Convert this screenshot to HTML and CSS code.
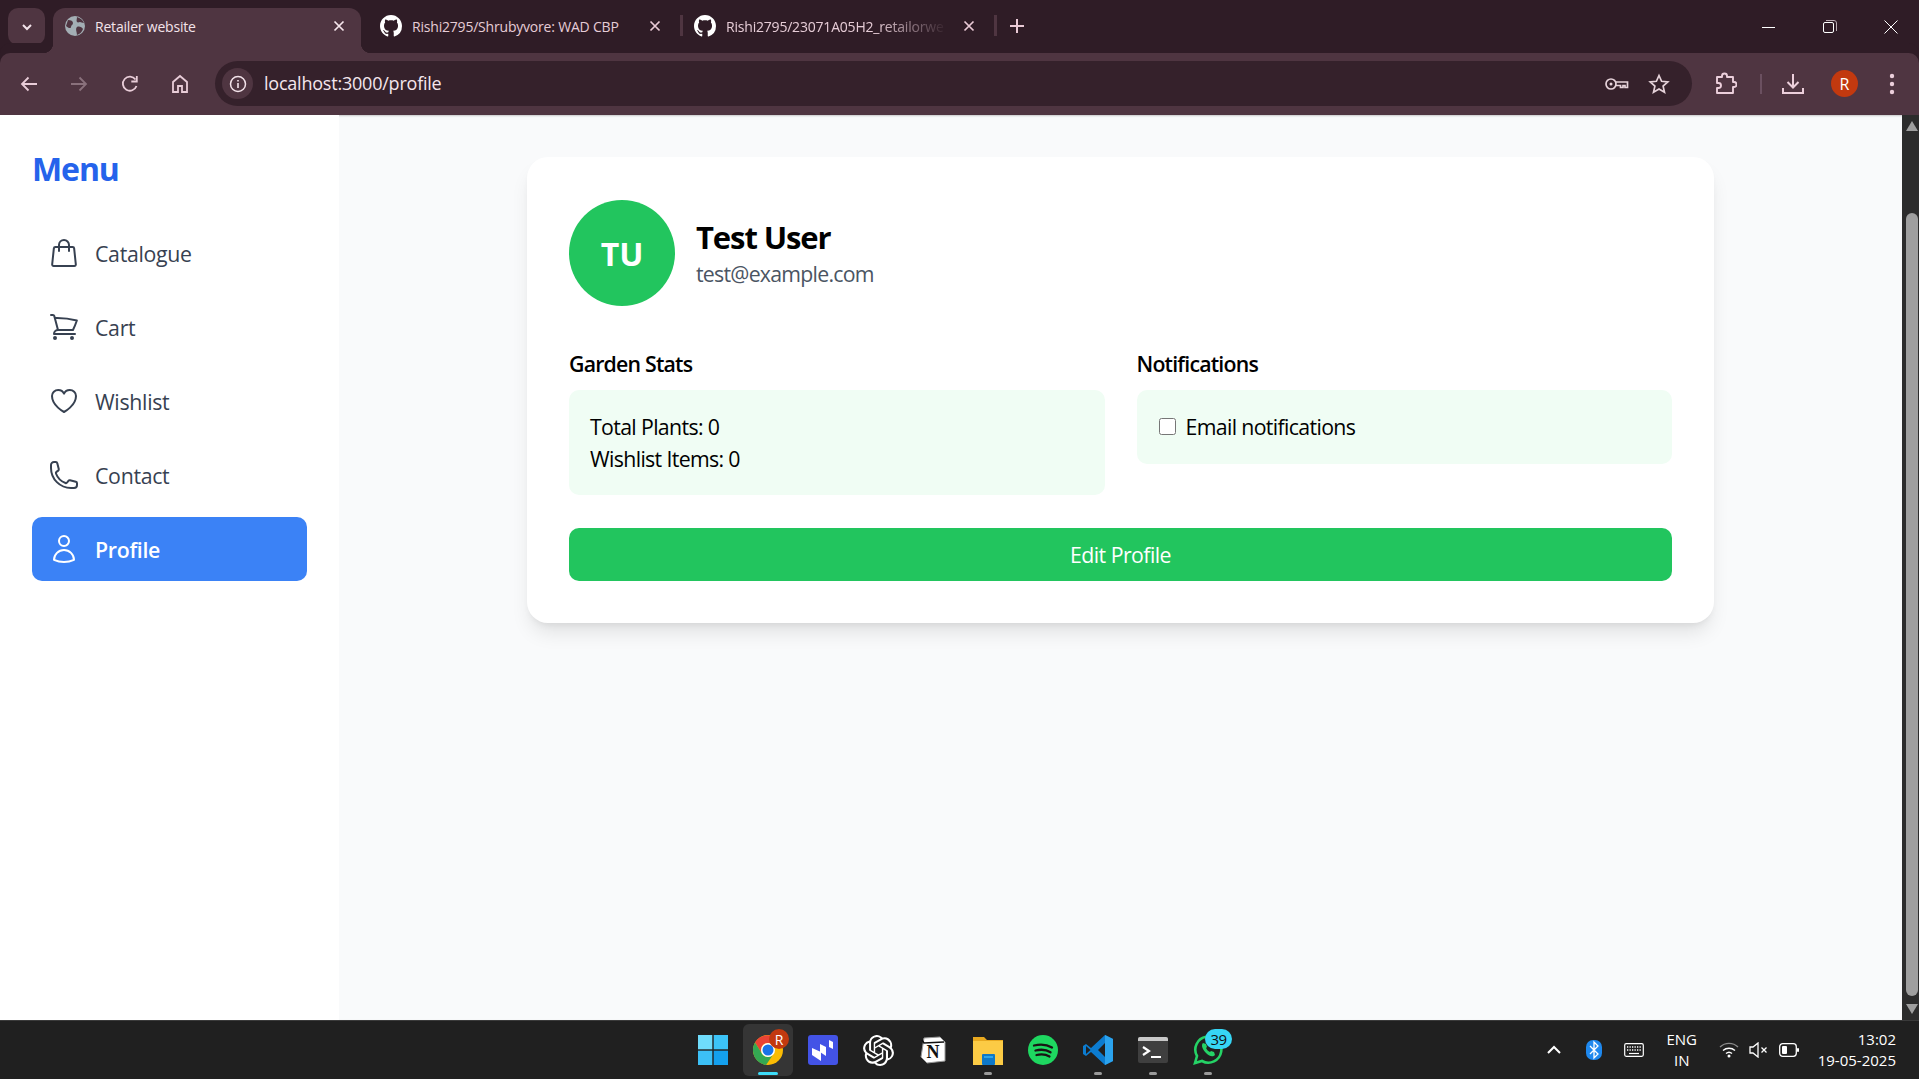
FILE: index.html

```html
<!DOCTYPE html>
<html lang="en">
<head>
  <meta charset="UTF-8" />
  <title>Retailer website</title>
  <link rel="stylesheet" href="styles.css">
</head>
<body>
  <div class="tabstrip">
    <div class="tab-search">
      <svg width="14" height="14" viewBox="0 0 14 14"><path d="M3 5l4 4 4-4" fill="none" stroke="#f3e3ea" stroke-width="2"/></svg>
    </div>
    <div class="tab active">
      <svg class="favicon" width="20" height="20" viewBox="0 0 20 20"><circle cx="10" cy="10" r="10" fill="#a3aeb4"/><path d="M3 4c3 0 5 1 5 3s-2 2-2 4-3 1-5-1zM12 1c3 1 6 3 7 6-2 0-3-1-4-1s-2 1-3 0 0-3 0-5zM12 11c2-1 5 0 6 2-1 3-3 5-6 6 0-3-2-6 0-8z" fill="#4f3541"/></svg>
      <span class="tab-title">Retailer website</span>
      <svg class="tab-x" width="12" height="12" viewBox="0 0 12 12"><path d="M1.5 1.5l9 9M10.5 1.5l-9 9" stroke="#f6e6ec" stroke-width="1.7"/></svg>
    </div>
    <div class="tab">
      <svg class="favicon" width="22" height="22" viewBox="0 0 16 16"><path fill="#fff" d="M8 0C3.58 0 0 3.58 0 8c0 3.54 2.29 6.53 5.47 7.59.4.07.55-.17.55-.38 0-.19-.01-.82-.01-1.49-2.01.37-2.53-.49-2.69-.94-.09-.23-.48-.94-.82-1.13-.28-.15-.68-.52-.01-.53.63-.01 1.08.58 1.23.82.72 1.21 1.87.87 2.33.66.07-.52.28-.87.51-1.07-1.78-.2-3.64-.89-3.64-3.95 0-.87.31-1.59.82-2.15-.08-.2-.36-1.02.08-2.12 0 0 .67-.21 2.2.82.64-.18 1.32-.27 2-.27s1.36.09 2 .27c1.53-1.04 2.2-.82 2.2-.82.44 1.1.16 1.92.08 2.12.51.56.82 1.27.82 2.15 0 3.07-1.87 3.75-3.65 3.95.29.25.54.73.54 1.48 0 1.07-.01 1.93-.01 2.2 0 .21.15.46.55.38A8.01 8.01 0 0 0 16 8c0-4.42-3.58-8-8-8z"/></svg>
      <span class="tab-title">Rishi2795/Shrubyvore: WAD CBP</span>
      <svg class="tab-x" width="12" height="12" viewBox="0 0 12 12"><path d="M1.5 1.5l9 9M10.5 1.5l-9 9" stroke="#e9c9d5" stroke-width="1.7"/></svg>
    </div>
    <div class="tab-sep"></div>
    <div class="tab">
      <svg class="favicon" width="22" height="22" viewBox="0 0 16 16"><path fill="#fff" d="M8 0C3.58 0 0 3.58 0 8c0 3.54 2.29 6.53 5.47 7.59.4.07.55-.17.55-.38 0-.19-.01-.82-.01-1.49-2.01.37-2.53-.49-2.69-.94-.09-.23-.48-.94-.82-1.13-.28-.15-.68-.52-.01-.53.63-.01 1.08.58 1.23.82.72 1.21 1.87.87 2.33.66.07-.52.28-.87.51-1.07-1.78-.2-3.64-.89-3.64-3.95 0-.87.31-1.59.82-2.15-.08-.2-.36-1.02.08-2.12 0 0 .67-.21 2.2.82.64-.18 1.32-.27 2-.27s1.36.09 2 .27c1.53-1.04 2.2-.82 2.2-.82.44 1.1.16 1.92.08 2.12.51.56.82 1.27.82 2.15 0 3.07-1.87 3.75-3.65 3.95.29.25.54.73.54 1.48 0 1.07-.01 1.93-.01 2.2 0 .21.15.46.55.38A8.01 8.01 0 0 0 16 8c0-4.42-3.58-8-8-8z"/></svg>
      <span class="tab-title fade">Rishi2795/23071A05H2_retailorwe</span>
      <svg class="tab-x" width="12" height="12" viewBox="0 0 12 12"><path d="M1.5 1.5l9 9M10.5 1.5l-9 9" stroke="#e9c9d5" stroke-width="1.7"/></svg>
    </div>
    <div class="tab-sep"></div>
    <svg class="tab-new" width="16" height="16" viewBox="0 0 16 16"><path d="M8 1v14M1 8h14" stroke="#e9c9d5" stroke-width="2"/></svg>
    <div class="window-controls">
      <svg width="14" height="14" viewBox="0 0 14 14"><path d="M0 7.5h13" stroke="#fff" stroke-width="1"/></svg>
      <svg width="14" height="14" viewBox="0 0 14 14"><rect x=".5" y="2.5" width="10" height="10" rx="1.5" fill="none" stroke="#fff"/><path d="M3 .5h8a2.500 2.500 0 0 1 2.500 2.500v8" fill="none" stroke="#b9aab1"/></svg>
      <svg width="14" height="14" viewBox="0 0 14 14"><path d="M.5.5l13 13M13.500.5l-13 13" stroke="#fff" stroke-width="1"/></svg>
    </div>
  </div>

  <div class="toolbar">
    <svg class="tool first" width="20" height="20" viewBox="0 0 20 20"><path d="M18 10H3M9.500 3.500L3 10l6.500 6.500" fill="none" stroke="#e9cdd8" stroke-width="1.800"/></svg>
    <svg class="tool" width="20" height="20" viewBox="0 0 20 20"><path d="M2 10h15M10.500 3.500L17 10l-6.500 6.500" fill="none" stroke="#8a717c" stroke-width="1.800"/></svg>
    <svg class="tool reload" width="20" height="20" viewBox="0 0 20 20"><path d="M16.500 12a7 7 0 1 1-1-6.500" fill="none" stroke="#e9cdd8" stroke-width="1.800"/><path d="M16.800 2v5.500h-5.500" fill="none" stroke="#e9cdd8" stroke-width="1.800"/></svg>
    <svg class="tool" width="20" height="20" viewBox="0 0 20 20"><path d="M3 18V8l7-6 7 6v10h-5v-6H8v6z" fill="none" stroke="#e9cdd8" stroke-width="1.800"/></svg>
    <div class="omnibox">
      <div class="site-info">
        <svg width="18" height="18" viewBox="0 0 18 18"><circle cx="9" cy="9" r="7.500" fill="none" stroke="#f3e3ea" stroke-width="1.500"/><path d="M9 8v5M9 5v1.600" stroke="#f3e3ea" stroke-width="1.600"/></svg>
      </div>
      <span class="url">localhost:3000/profile</span>
      <svg class="omni-key" width="24" height="14" viewBox="0 0 24 14"><circle cx="6" cy="7" r="5" fill="none" stroke="#e6d3da" stroke-width="1.700"/><circle cx="6" cy="7" r="1.500" fill="#e6d3da"/><path d="M11 5h11.500v5.500h-2.500V8.500h-2V10.500h-2.500V8.500H11" fill="none" stroke="#e6d3da" stroke-width="1.700"/></svg>
      <svg class="omni-star" width="22" height="22" viewBox="0 0 22 22"><path d="M11 2.500l2.600 5.800 6.200.6-4.700 4.200 1.400 6.200L11 16.100l-5.500 3.200 1.400-6.200-4.700-4.200 6.200-.6z" fill="none" stroke="#e6d3da" stroke-width="1.700"/></svg>
    </div>
    <svg class="ext" width="24" height="24" viewBox="0 0 24 24"><path d="M4 5h5V4a2.500 2.500 0 0 1 5 0v1h6v5h1a2.500 2.500 0 0 1 0 5h-1v6H4v-5h1.500a2.500 2.500 0 0 0 0-5H4z" fill="none" stroke="#eccfdb" stroke-width="1.900" stroke-linejoin="round"/></svg>
    <div class="tool-sep"></div>
    <svg class="dl" width="24" height="24" viewBox="0 0 24 24"><path d="M12 2v13M6.500 10l5.500 5.500 5.500-5.500M2 16v5h20v-5" fill="none" stroke="#eccfdb" stroke-width="2"/></svg>
    <div class="avatar-small">R</div>
    <svg class="dots" width="6" height="22" viewBox="0 0 6 22"><circle cx="3" cy="3" r="2.200" fill="#eccfdb"/><circle cx="3" cy="11" r="2.200" fill="#eccfdb"/><circle cx="3" cy="19" r="2.200" fill="#eccfdb"/></svg>
  </div>

  <div class="page">
    <aside class="sidebar">
      <h2 class="menu-title">Menu</h2>
      <nav class="menu">
        <a class="menu-item">
          <svg width="32" height="32" viewBox="0 0 24 24" fill="none" stroke="currentColor" stroke-width="1.500" stroke-linecap="round" stroke-linejoin="round"><path d="M15.750 10.500V6a3.750 3.750 0 1 0-7.500 0v4.500m11.356-1.993l1.263 12c.07.665-.45 1.243-1.119 1.243H4.250a1.125 1.125 0 0 1-1.120-1.243l1.264-12A1.125 1.125 0 0 1 5.513 7.500h12.974c.576 0 1.059.435 1.119 1.007z"/></svg>
          Catalogue
        </a>
        <a class="menu-item">
          <svg width="32" height="32" viewBox="0 0 24 24" fill="none" stroke="currentColor" stroke-width="1.500" stroke-linecap="round" stroke-linejoin="round"><path d="M2.250 3h1.386c.51 0 .955.343 1.087.835l.383 1.437M7.500 14.250a3 3 0 0 0-3 3h15.750m-12.750-3h11.218c1.121-2.300 2.100-4.684 2.924-7.138a60.114 60.114 0 0 0-16.536-1.840M7.500 14.250L5.106 5.272M6 20.250a.75.75 0 1 1-1.500 0 .75.75 0 0 1 1.500 0zm12.750 0a.75.75 0 1 1-1.500 0 .75.75 0 0 1 1.500 0z"/></svg>
          Cart
        </a>
        <a class="menu-item">
          <svg width="32" height="32" viewBox="0 0 24 24" fill="none" stroke="currentColor" stroke-width="1.500" stroke-linecap="round" stroke-linejoin="round"><path d="M21 8.250c0-2.485-2.099-4.500-4.688-4.500-1.935 0-3.597 1.126-4.312 2.733-.715-1.607-2.377-2.733-4.313-2.733C5.100 3.750 3 5.765 3 8.250c0 7.220 9 12 9 12s9-4.780 9-12z"/></svg>
          Wishlist
        </a>
        <a class="menu-item">
          <svg width="32" height="32" viewBox="0 0 24 24" fill="none" stroke="currentColor" stroke-width="1.500" stroke-linecap="round" stroke-linejoin="round"><path d="M2.250 6.750c0 8.284 6.716 15 15 15h2.250a2.250 2.250 0 0 0 2.250-2.250v-1.372c0-.516-.351-.966-.852-1.091l-4.423-1.106c-.44-.11-.902.055-1.173.417l-.97 1.293c-.282.376-.769.542-1.210.38a12.035 12.035 0 0 1-7.143-7.143c-.162-.441.004-.928.38-1.210l1.293-.970c.363-.271.527-.734.417-1.173L6.963 3.102a1.125 1.125 0 0 0-1.091-.852H4.500A2.250 2.250 0 0 0 2.250 4.500v2.250z"/></svg>
          Contact
        </a>
        <a class="menu-item current">
          <svg width="32" height="32" viewBox="0 0 24 24" fill="none" stroke="currentColor" stroke-width="1.500" stroke-linecap="round" stroke-linejoin="round"><path d="M15.750 6a3.750 3.750 0 1 1-7.500 0 3.750 3.750 0 0 1 7.500 0zM4.501 20.118a7.500 7.500 0 0 1 14.998 0A17.933 17.933 0 0 1 12 21.750c-2.676 0-5.216-.584-7.499-1.632z"/></svg>
          Profile
        </a>
      </nav>
    </aside>

    <main class="content">
      <section class="card">
        <div class="profile-head">
          <div class="avatar">TU</div>
          <div>
            <h1 class="name">Test User</h1>
            <p class="email">test@example.com</p>
          </div>
        </div>
        <div class="columns">
          <div>
            <h3 class="col-title">Garden Stats</h3>
            <div class="panel">
              <p>Total Plants: 0</p>
              <p>Wishlist Items: 0</p>
            </div>
          </div>
          <div>
            <h3 class="col-title">Notifications</h3>
            <div class="panel">
              <label class="check"><input type="checkbox"> Email notifications</label>
            </div>
          </div>
        </div>
        <button class="edit-btn">Edit Profile</button>
      </section>
    </main>

    <div class="scrollbar">
      <svg width="17" height="17" viewBox="0 0 17 17"><path d="M4 16l6-10 6 10z" fill="#9f9f9f"/></svg>
      <div class="scroll-track"><div class="scroll-thumb"></div></div>
      <svg width="17" height="17" viewBox="0 0 17 17"><path d="M4 1l6 10 6-10z" fill="#9f9f9f"/></svg>
    </div>
  </div>

  <footer class="taskbar">
    <div></div>
    <div class="task-icons">
      <div class="task-icon">
        <svg width="30" height="30" viewBox="0 0 30 30"><rect width="14.300" height="14.300" fill="#6fdcfb"/><rect x="15.700" width="14.300" height="14.300" fill="#3cc4f8"/><rect y="15.700" width="14.300" height="14.300" fill="#3cc0f6"/><rect x="15.700" y="15.700" width="14.300" height="14.300" fill="#14a0ee"/></svg>
      </div>
      <div class="task-icon open">
        <svg width="30" height="30" viewBox="0 0 30 30"><circle cx="15" cy="15" r="15" fill="#fbbc04"/><path d="M15 8H28A15 15 0 0 0 2 7.500L8.900 18.500A7 7 0 0 1 15 8z" fill="#ea4335"/><path d="M2 7.500A15 15 0 0 0 13 29.900L19.500 20.400A7 7 0 0 1 8.900 18.500z" fill="#34a853"/><circle cx="15" cy="15" r="7" fill="#fff"/><circle cx="15" cy="15" r="5.500" fill="#1a73e8"/></svg>
        <span class="chrome-badge">R</span>
      </div>
      <div class="task-icon">
        <svg width="30" height="30" viewBox="0 0 30 30"><rect width="30" height="30" rx="3" fill="#4353e6"/><path d="M4 13l9 4v9l-9-6z" fill="#fff"/><path d="M12 9l6 3v9l-6-4z" fill="#fff"/><path d="M21 5l4 2v7l-4-2z" fill="#fff"/></svg>
      </div>
      <div class="task-icon">
        <svg width="31" height="31" viewBox="0 0 24 24"><path fill="#fff" d="M22.282 9.821a5.985 5.985 0 0 0-.516-4.910 6.046 6.046 0 0 0-6.510-2.900A6.065 6.065 0 0 0 4.981 4.180a5.985 5.985 0 0 0-3.998 2.900 6.046 6.046 0 0 0 .743 7.097 5.980 5.980 0 0 0 .510 4.911 6.051 6.051 0 0 0 6.515 2.900A5.985 5.985 0 0 0 13.260 24a6.056 6.056 0 0 0 5.772-4.206 5.990 5.990 0 0 0 3.997-2.900 6.056 6.056 0 0 0-.747-7.073zM13.260 22.430a4.476 4.476 0 0 1-2.876-1.040l.141-.081 4.779-2.758a.795.795 0 0 0 .392-.681v-6.737l2.020 1.168a.071.071 0 0 1 .038.052v5.583a4.504 4.504 0 0 1-4.494 4.494zM3.600 18.304a4.470 4.470 0 0 1-.535-3.014l.142.085 4.783 2.759a.771.771 0 0 0 .780 0l5.843-3.369v2.332a.080.080 0 0 1-.033.062L9.740 19.950a4.500 4.500 0 0 1-6.140-1.646zM2.340 7.896a4.485 4.485 0 0 1 2.366-1.973V11.600a.766.766 0 0 0 .388.676l5.815 3.355-2.020 1.168a.076.076 0 0 1-.071 0l-4.830-2.786A4.504 4.504 0 0 1 2.340 7.872zm16.597 3.855l-5.833-3.387L15.119 7.200a.076.076 0 0 1 .071 0l4.830 2.791a4.494 4.494 0 0 1-.676 8.105v-5.678a.790.790 0 0 0-.407-.667zm2.010-3.023l-.141-.085-4.774-2.782a.776.776 0 0 0-.785 0L9.409 9.230V6.897a.066.066 0 0 1 .028-.061l4.830-2.787a4.500 4.500 0 0 1 6.680 4.660zm-12.640 4.135l-2.020-1.164a.080.080 0 0 1-.038-.057V6.075a4.500 4.500 0 0 1 7.375-3.453l-.142.080L8.704 5.460a.795.795 0 0 0-.393.681zm1.097-2.365l2.602-1.500 2.607 1.500v2.999l-2.597 1.500-2.607-1.500z"/></svg>
      </div>
      <div class="task-icon">
        <svg width="26" height="28" viewBox="0 0 26 28"><path d="M4 2l16-1 5 5v19l-18 2-6-6z" fill="#fff" stroke="#9a9a9a"/><path d="M2 4l2 3 20-1" fill="none" stroke="#111" stroke-width="1.500"/><text x="13" y="22" class="notion-n">N</text></svg>
      </div>
      <div class="task-icon running">
        <svg width="30" height="30" viewBox="0 0 30 30"><path d="M0 2h11l3 3h16v25H0z" fill="#e9a91f"/><rect y="6" width="30" height="24" fill="#fccb45"/><rect x="9" y="19" width="13" height="11" rx="1" fill="#0f78c8"/><rect x="11" y="21" width="9" height="2" fill="#2da4ea"/></svg>
      </div>
      <div class="task-icon">
        <svg width="30" height="30" viewBox="0 0 30 30"><circle cx="15" cy="15" r="15" fill="#1ed760"/><path d="M6 10.500c6-1.500 13-1 18 2M7.500 15.500c5-1.200 11-.8 15 1.800M8.500 20c4.500-1 9.500-.6 13 1.500" fill="none" stroke="#191414" stroke-width="2.300" stroke-linecap="round"/></svg>
      </div>
      <div class="task-icon running">
        <svg width="30" height="30" viewBox="0 0 30 30"><path d="M22 0l8 4v22l-8 4-14-13-5 4-3-2v-8l3-2 5 4z" fill="#0c7cd0"/><path d="M22 0l8 4v22l-8 4z" fill="#2ba3ee"/><path d="M22 8l-7 7 7 7z" fill="#202020"/><path d="M3 11l4.500 4L3 19z" fill="#202020"/></svg>
      </div>
      <div class="task-icon running">
        <svg width="30" height="26" viewBox="0 0 30 26"><rect width="30" height="26" rx="2" fill="#3f3f3f"/><path d="M0 2a2 2 0 0 1 2-2h26a2 2 0 0 1 2 2v2H0z" fill="#c8c8c8"/><path d="M5 10l6 4-6 4" fill="none" stroke="#fff" stroke-width="2.200"/><path d="M13 20h10" stroke="#fff" stroke-width="2"/></svg>
      </div>
      <div class="task-icon running">
        <svg width="30" height="30" viewBox="0 0 30 30"><path d="M2 28l2-7A13 13 0 1 1 9 26z" fill="none" stroke="#25d366" stroke-width="2.600"/><path d="M10 8c-2 2-1 6 3 10s7 4 9 2l-1-3-3-1-1 1c-2-1-3-2-4-4l1-1-1-3z" fill="#25d366"/></svg>
        <span class="wa-badge">39</span>
      </div>
    </div>
    <div class="tray">
      <svg class="tray-chev" width="16" height="10" viewBox="0 0 16 10"><path d="M2 8l6-6 6 6" fill="none" stroke="#fff" stroke-width="2"/></svg>
      <svg class="tray-bt" width="16" height="20" viewBox="0 0 16 20"><rect width="16" height="20" rx="7" fill="#1e88ee"/><path d="M4 6l8 8-4 4V2l4 4-8 8" fill="none" stroke="#fff" stroke-width="1.300"/></svg>
      <svg class="tray-kb" width="20" height="14" viewBox="0 0 20 14"><rect x=".7" y=".7" width="18.600" height="12.600" rx="1.500" fill="none" stroke="#fff" stroke-width="1.200"/><path d="M3 4h14M3 7h14" stroke="#fff" stroke-width="1.300" stroke-dasharray="1.300 1.200"/><path d="M5 10.500h10" stroke="#fff" stroke-width="1.200"/></svg>
      <div class="tray-lang">ENG<br>IN</div>
      <svg class="tray-wifi" width="20" height="16" viewBox="0 0 20 16"><path d="M1 5a13 13 0 0 1 18 0" fill="none" stroke="#8a8a8a" stroke-width="1.400"/><path d="M4 8.500a9 9 0 0 1 12 0M7 11.500a4.500 4.500 0 0 1 6 0" fill="none" stroke="#fff" stroke-width="1.400"/><circle cx="10" cy="14" r="1.500" fill="#fff"/></svg>
      <svg class="tray-vol" width="20" height="16" viewBox="0 0 20 16"><path d="M1 5h3l5-4v14l-5-4H1z" fill="none" stroke="#fff" stroke-width="1.300"/><path d="M12.500 5.500l5 5M17.500 5.500l-5 5" stroke="#fff" stroke-width="1.300"/></svg>
      <svg class="tray-bat" width="20" height="14" viewBox="0 0 20 14"><rect x=".7" y=".7" width="16.600" height="12.600" rx="3" fill="none" stroke="#fff" stroke-width="1.300"/><rect x="3" y="3" width="5" height="8" rx="1" fill="#fff"/><rect x="18" y="5" width="2" height="4" rx="1" fill="#fff"/></svg>
      <div class="tray-clock"><div>13:02</div><div>19-05-2025</div></div>
    </div>
  </footer>
</body>
</html>
```

FILE: styles.css

```css
* {
  box-sizing: border-box;
}
html, body {
  height: 100%;
}
body {
  margin: 0;
  display: flex;
  flex-direction: column;
  overflow: hidden;
  font-family: "Open Sans", "Noto Sans", sans-serif;
  background: #f9fafb;
}
h1, h2, h3, p {
  margin: 0;
}

/* browser chrome */
.tabstrip {
  height: 53px;
  flex: none;
  display: flex;
  align-items: flex-end;
  padding-left: 8px;
  background: #2f1c26;
}
.tab-search {
  width: 37px;
  height: 37px;
  margin: 0 8px 8px 0;
  border-radius: 10px;
  background: #4f3541;
  display: flex;
  align-items: center;
  justify-content: center;
}
.tab {
  width: 314px;
  height: 45px;
  flex: none;
  position: relative;
  display: flex;
  align-items: center;
  padding: 0 21px 9px 12px;
  font-size: 14px;
  letter-spacing: -0.2px;
  color: #e6ccd6;
}
.tab.active {
  width: 308px;
  margin-right: 7px;
  padding-right: 16px;
  background: #4f3541;
  border-radius: 12px 12px 0 0;
  color: #f3e3ea;
}
.tab.active::before,
.tab.active::after {
  content: "";
  position: absolute;
  bottom: 0;
  width: 10px;
  height: 10px;
}
.tab.active::before {
  left: -10px;
  background: radial-gradient(circle at 0 0, transparent 10px, #4f3541 10.500px);
}
.tab.active::after {
  right: -10px;
  background: radial-gradient(circle at 100% 0, transparent 10px, #4f3541 10.500px);
}
.favicon {
  flex: none;
  margin-right: 10px;
}
.tab-title {
  flex: 1;
  white-space: nowrap;
}
.tab-title.fade {
  -webkit-mask-image: linear-gradient(to right, #000 150px, transparent 222px);
  mask-image: linear-gradient(to right, #000 150px, transparent 222px);
}
.tab-x {
  flex: none;
  margin-left: 12px;
}
.tab-sep {
  width: 3px;
  height: 21px;
  margin: 0 -1px 17px -2px;
  background: #4f3541;
  flex: none;
}
.tab-new {
  margin: 0 0 19px 13px;
  flex: none;
}
.window-controls {
  margin-left: auto;
  align-self: center;
  display: flex;
  gap: 47px;
  padding-right: 21px;
}
.toolbar {
  height: 62px;
  flex: none;
  display: flex;
  align-items: center;
  padding-bottom: 1px;
  background: #4f3541;
  border-radius: 10px 10px 0 0;
  box-shadow: 0 -10px 0 #2f1c26;
}
.tool {
  margin-left: 30px;
  flex: none;
}
.tool.first {
  margin-left: 19px;
}
.tool.reload {
  margin-left: 31px;
}
.omnibox {
  width: 1477px;
  height: 45px;
  margin-left: 25px;
  flex: none;
  display: flex;
  align-items: center;
  padding-left: 7px;
  border-radius: 23px;
  background: #35212b;
}
.site-info {
  width: 31px;
  height: 31px;
  border-radius: 50%;
  background: #4f3541;
  display: flex;
  align-items: center;
  justify-content: center;
}
.url {
  margin-left: 11px;
  padding-bottom: 2px;
  font-size: 18px;
  letter-spacing: -0.22px;
  color: #f4e6ec;
}
.omni-key {
  margin-left: auto;
}
.omni-star {
  margin: 0 22px 0 19px;
}
.ext {
  margin-left: 21px;
}
.tool-sep {
  width: 2px;
  height: 20px;
  margin-left: 23px;
  background: #6b5060;
}
.dl {
  margin-left: 19px;
}
.avatar-small {
  width: 27px;
  height: 27px;
  margin-left: 26px;
  border-radius: 50%;
  background: #c2390f;
  color: #fff;
  font-size: 16px;
  display: flex;
  align-items: center;
  justify-content: center;
}
.dots {
  margin-left: 31px;
}

/* app */
.page {
  flex: 1;
  min-height: 0;
  display: flex;
  box-shadow: inset 0 1px 2px rgba(0,0,0,0.2);
}
.sidebar {
  width: 339px;
  flex: none;
  padding: 32px 32px 0;
  background: #fff;
}
.menu-title {
  font-size: 32px;
  line-height: 44px;
  font-weight: 700;
  letter-spacing: -1.1px;
  color: #2563eb;
}
.menu {
  display: flex;
  flex-direction: column;
  gap: 10px;
  margin-top: 30px;
}
.menu-item {
  height: 64px;
  display: flex;
  align-items: center;
  gap: 15px;
  padding-left: 16px;
  border-radius: 10px;
  font-size: 21.300px;
  font-weight: 500;
  letter-spacing: -0.3px;
  color: #374151;
}
.menu-item.current {
  background: #3b82f6;
  color: #fff;
  font-weight: 600;
}
.content {
  flex: 1;
  min-width: 0;
  padding-top: 42px;
}
.card {
  width: 1187px;
  margin: 0 auto;
  padding: 43px 42px 42px;
  border-radius: 21px;
  background: #fff;
  box-shadow: 0 13px 20px -4px rgba(0,0,0,0.1), 0 5px 8px -5px rgba(0,0,0,0.1);
}
.profile-head {
  display: flex;
  align-items: center;
  gap: 21px;
}
.avatar {
  width: 106px;
  height: 106px;
  border-radius: 50%;
  background: #22c55e;
  color: #fff;
  font-size: 32px;
  font-weight: 700;
  display: flex;
  align-items: center;
  justify-content: center;
}
.name {
  font-size: 31px;
  line-height: 42px;
  font-weight: 700;
  letter-spacing: -1.1px;
  color: #000;
}
.email {
  font-size: 21.300px;
  line-height: 32px;
  letter-spacing: -0.75px;
  color: #4b5563;
}
.columns {
  display: grid;
  grid-template-columns: 1fr 1fr;
  align-items: start;
  gap: 32px;
  margin-top: 42px;
}
.col-title {
  font-size: 21.300px;
  line-height: 32px;
  font-weight: 600;
  letter-spacing: -0.8px;
  color: #000;
  margin-bottom: 10px;
}
.panel {
  padding: 21px;
  border-radius: 10px;
  background: #f0fdf4;
  font-size: 21.300px;
  line-height: 31.500px;
  letter-spacing: -0.65px;
  color: #000;
}
.check {
  display: flex;
  align-items: center;
  gap: 10px;
}
.check input {
  width: 17px;
  height: 17px;
  margin: 0 0 0 1px;
}
.edit-btn {
  display: block;
  width: 100%;
  height: 53px;
  margin-top: 33px;
  border: 0;
  border-radius: 10px;
  background: #22c55e;
  color: #fff;
  font-family: inherit;
  font-size: 21.300px;
  font-weight: 500;
  letter-spacing: -0.55px;
}
.scrollbar {
  width: 17px;
  flex: none;
  display: flex;
  flex-direction: column;
  background: #2c2c2c;
}
.scrollbar svg {
  flex: none;
}
.scroll-track {
  flex: 1;
  padding-top: 81px;
}
.scroll-thumb {
  height: 783px;
  margin: 0 1px 0 4px;
  background: #9f9f9f;
  border-radius: 6px;
}

/* windows taskbar */
.taskbar {
  height: 59px;
  flex: none;
  display: grid;
  grid-template-columns: 1fr auto 1fr;
  align-items: center;
  background: #202020;
  border-top: 1px solid #3a3a3a;
  color: #fff;
}
.task-icons {
  display: flex;
  gap: 5px;
  padding-left: 2px;
}
.task-icon {
  width: 50px;
  height: 52px;
  position: relative;
  display: flex;
  align-items: center;
  justify-content: center;
}
.task-icon.open {
  background: #353535;
  border-radius: 6px;
}
.task-icon.open::after,
.task-icon.running::after {
  content: "";
  position: absolute;
  bottom: 1px;
  left: 50%;
  height: 3px;
  border-radius: 2px;
  transform: translateX(-50%);
}
.task-icon.open::after {
  width: 20px;
  background: #3ddcf8;
}
.task-icon.running::after {
  width: 8px;
  background: #9a9a9a;
}
.chrome-badge {
  position: absolute;
  top: 5px;
  right: 4px;
  width: 20px;
  height: 20px;
  border-radius: 50%;
  background: #c2390f;
  color: #fff;
  font-size: 14px;
  display: flex;
  align-items: center;
  justify-content: center;
}
.wa-badge {
  position: absolute;
  top: 5px;
  right: 1px;
  width: 27px;
  height: 20px;
  border-radius: 10px;
  background: #36d6f5;
  color: #111;
  font-size: 15px;
  letter-spacing: -0.5px;
  display: flex;
  align-items: center;
  justify-content: center;
}
.notion-n {
  font-family: "Liberation Serif", serif;
  font-size: 18px;
  font-weight: 700;
  text-anchor: middle;
  fill: #111;
}
.tray {
  display: flex;
  align-items: center;
  justify-content: flex-end;
  padding-right: 23px;
}
.tray-bt {
  margin-left: 24px;
}
.tray-kb {
  margin-left: 22px;
}
.tray-lang {
  width: 42px;
  margin-left: 17px;
  text-align: center;
  font-size: 15px;
  line-height: 21px;
}
.tray-wifi {
  margin-left: 16px;
}
.tray-vol {
  margin-left: 10px;
}
.tray-bat {
  margin-left: 10px;
}
.tray-clock {
  margin-left: 19px;
  text-align: right;
  font-size: 15px;
  line-height: 21px;
}
```
